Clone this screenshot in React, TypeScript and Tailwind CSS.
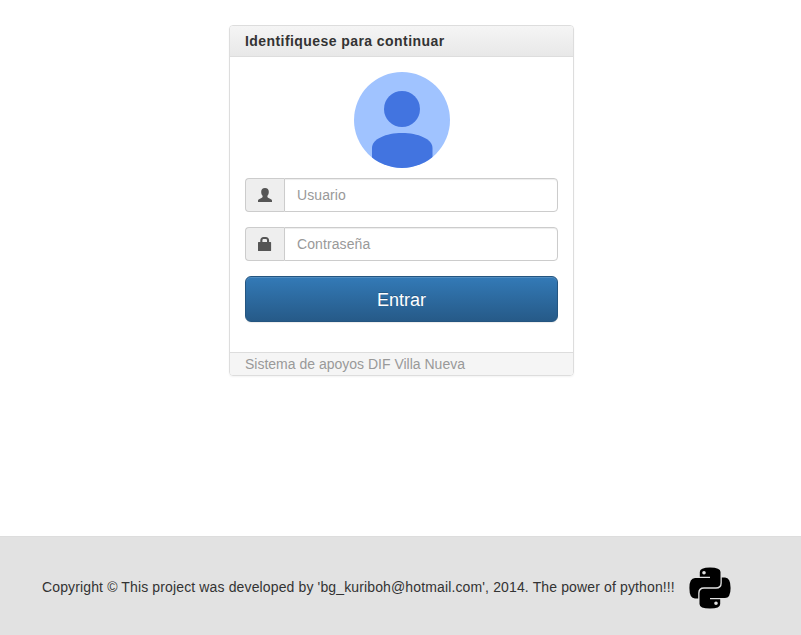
import React from "react";

function UserIcon() {
  return (
    <svg width="14" height="14" viewBox="0 0 14 14" fill="#555">
      <path d="M7 0C4.500 0 3.200 1.400 3.200 3.700c0 1.600.4 3 1.400 4.100v1c0 .5-.2.800-.7 1L1 11.200C.3 11.600 0 12 0 12.800V14h14v-1.200c0-.8-.3-1.200-1-1.600L10.100 9.800c-.5-.2-.7-.5-.7-1v-1c1-1.100 1.400-2.500 1.400-4.100C10.800 1.400 9.500 0 7 0z" />
    </svg>
  );
}

function LockIcon() {
  return (
    <svg width="14" height="14" viewBox="0 0 14 14" fill="#555">
      <path
        fillRule="evenodd"
        d="M.6 5h1.700V3.300C2.300 1.300 3.700 0 5.500 0h2.300C9.700 0 11.100 1.300 11.100 3.300V5h1.400c.4 0 .6.200.6.600v7.800c0 .4-.2.600-.6.600H.6c-.4 0-.6-.2-.6-.6V5.600C0 5.200.2 5 .6 5zM4.400 5H9V3.300C9 2.400 8.400 1.900 7.600 1.900H5.800C5 1.900 4.400 2.400 4.400 3.300z"
      />
    </svg>
  );
}

function Avatar() {
  return (
    <svg className="mx-auto mb-2.5 block size-24" viewBox="0 0 96 96">
      <defs>
        <clipPath id="avatar-circle">
          <circle cx="48" cy="48" r="48" />
        </clipPath>
      </defs>
      <g clipPath="url(#avatar-circle)">
        <rect width="96" height="96" fill="#a0c3ff" />
        <circle cx="48" cy="37" r="18" fill="#4274e0" />
        <path d="M18 96V76C18 67 32 61 48 61s30.500 6 30.500 15v20z" fill="#4274e0" />
      </g>
    </svg>
  );
}

const snake =
  "M10.800 9.700V5Q10.800 .4 21 .4Q31.500 .4 31.500 5V15.500Q31.500 20.200 27 20.200H15Q9.200 20.200 9.200 26V31.500H6Q.4 31.500 .4 21Q.4 11 6 11H21V9.700zM15 4a1.800 1.800 0 1 0 0 3.600a1.800 1.800 0 1 0 0-3.600z";

function PythonLogo() {
  return (
    <svg className="ml-3.5 size-[42px]" viewBox="0 0 42 42" fillRule="evenodd">
      <path d={snake} />
      <path d={snake} transform="rotate(180 21 21)" />
    </svg>
  );
}

function Field({ icon, type, placeholder }: { icon: React.ReactNode; type: string; placeholder: string }) {
  return (
    <div className="mb-[15px] flex h-[34px]">
      <span className="flex w-[39px] shrink-0 items-center justify-center rounded-l border border-r-0 border-[#ccc] bg-[#eee]">
        {icon}
      </span>
      <input
        type={type}
        placeholder={placeholder}
        className="min-w-0 flex-1 rounded-r border border-[#ccc] bg-white px-3 text-sm tracking-[0.1px] text-[#555] shadow-[inset_0_1px_1px_rgba(0,0,0,0.075)] outline-none placeholder:text-[#999]"
      />
    </div>
  );
}

export default function App() {
  return (
    <div className="flex h-[635px] flex-col overflow-hidden bg-white font-['Liberation_Sans',Arial,sans-serif] text-sm leading-5 text-[#333]">
      <main className="flex-1 pt-[25px]">
        <section className="ml-[229px] w-[345px] rounded border border-[#ddd] shadow-[0_1px_2px_rgba(0,0,0,0.05)]">
          <header className="h-[31px] rounded-t-[3px] border-b border-[#ddd] bg-linear-to-b from-[#f5f5f5] to-[#e8e8e8] px-[15px] pt-[5px] font-bold tracking-[0.43px]">
            Identifiquese para continuar
          </header>
          <form className="p-[15px]" onSubmit={(e) => e.preventDefault()}>
            <Avatar />
            <Field icon={<UserIcon />} type="text" placeholder="Usuario" />
            <Field icon={<LockIcon />} type="password" placeholder="Contraseña" />
            <button className="mb-[15px] block h-[46px] w-full rounded-md border border-[#245580] bg-linear-to-b from-[#337ab7] to-[#265a88] pt-0.5 text-lg text-white shadow-[inset_0_1px_0_rgba(255,255,255,0.15),0_1px_1px_rgba(0,0,0,0.075)] [text-shadow:0_-1px_0_rgba(0,0,0,0.2)]">
              Entrar
            </button>
          </form>
          <footer className="h-[23px] rounded-b-[3px] border-t border-[#ddd] bg-[#f5f5f5] px-[15px] pt-px text-[#999]">
            Sistema de apoyos DIF Villa Nueva
          </footer>
        </section>
      </main>
      <footer className="flex h-[99px] items-center border-t border-[#ddd] bg-[#e2e2e2] pt-1 pl-[42px]">
        <p className="pb-0.5 whitespace-nowrap tracking-[0.134px]">
          Copyright © This project was developed by 'bg_kuriboh@hotmail.com', 2014. The power of python!!!
        </p>
        <PythonLogo />
      </footer>
    </div>
  );
}
